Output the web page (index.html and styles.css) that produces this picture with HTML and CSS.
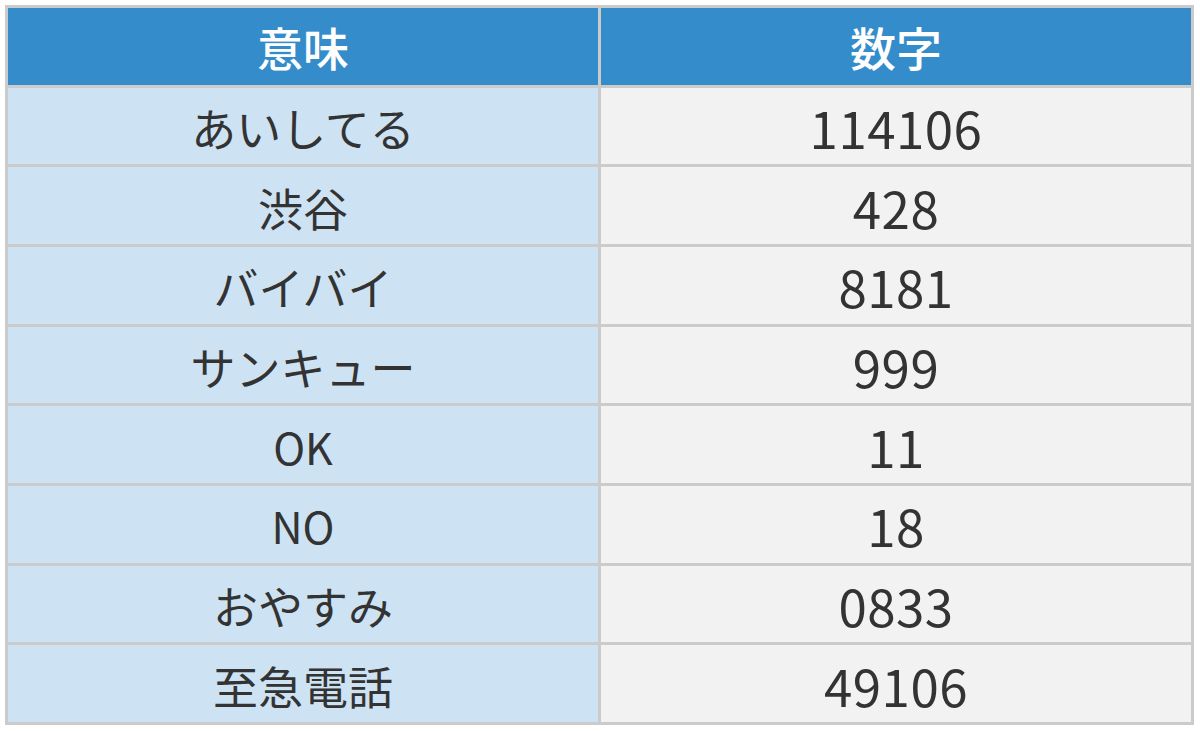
FILE: index.html
```html
<!DOCTYPE html>
<html lang="ja">
<head>
<meta charset="utf-8">
<title>数字の意味</title>
<link rel="stylesheet" href="styles.css">
</head>
<body>
<div class="table">
  <div class="cell head">意味</div><div class="cell head">数字</div>
  <div class="cell key">あいしてる</div><div class="cell val">114106</div>
  <div class="cell key">渋谷</div><div class="cell val">428</div>
  <div class="cell key">バイバイ</div><div class="cell val">8181</div>
  <div class="cell key">サンキュー</div><div class="cell val">999</div>
  <div class="cell key latin">OK</div><div class="cell val">11</div>
  <div class="cell key latin">NO</div><div class="cell val">18</div>
  <div class="cell key">おやすみ</div><div class="cell val">0833</div>
  <div class="cell key">至急電話</div><div class="cell val">49106</div>
</div>
</body>
</html>
```
FILE: styles.css
```css
html, body {
  margin: 0;
  background: #ffffff;
}
body {
  padding: 5px 6px 6px 5px;
  font-family: "Noto Sans CJK JP", "Noto Sans", sans-serif;
}
.table {
  display: grid;
  grid-template-columns: 1fr 1fr;
  grid-template-rows: repeat(9, 1fr);
  gap: 3px;
  padding: 3px;
  height: 720px;
  box-sizing: border-box;
  background: #cbcbcb;
}
.cell {
  display: flex;
  align-items: center;
  justify-content: center;
  font-size: 45px;
  color: #333333;
  line-height: 1;
  padding-top: 3px;
}
.head {
  background: #358cca;
  color: #ffffff;
  font-size: 46px;
  font-weight: 500;
  padding-top: 0;
}
.key {
  background: #cde3f3;
}
.latin {
  font-size: 43px;
}
.val {
  background: #f2f2f2;
  font-size: 51px;
  letter-spacing: 0.5px;
}
```
